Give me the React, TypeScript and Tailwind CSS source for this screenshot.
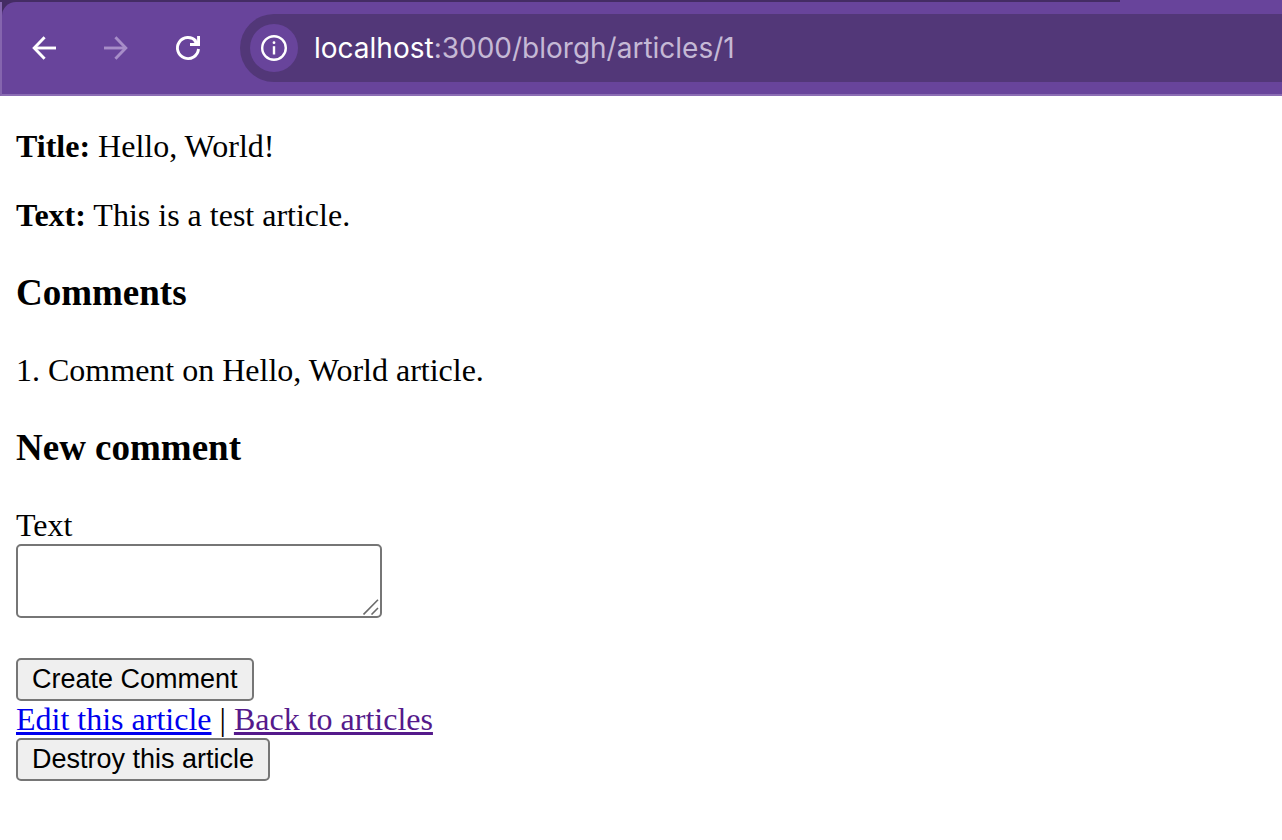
import React from "react";

function BackIcon({ className }: { className?: string }) {
  return (
    <svg viewBox="0 0 28 28" className={className} fill="none" stroke="currentColor" strokeWidth="2.9" aria-hidden="true">
      <path d="M14.6 3.2 L4.2 14 L14.6 24.8" />
      <path d="M4.4 14 H26" />
    </svg>
  );
}

function ReloadIcon() {
  return (
    <svg viewBox="0 0 28 28" className="size-7" fill="none" stroke="currentColor" strokeWidth="2.9" aria-hidden="true">
      <path d="M24.5 15 A10.55 10.55 0 1 1 21.9 7" />
      <path d="M24.55 2 V10.5 H16" />
      <path d="M20.5 6.5 L24.3 10.3" strokeWidth="3.2" />
    </svg>
  );
}

function InfoIcon() {
  return (
    <svg viewBox="0 0 26 26" className="size-[26px]" fill="none" stroke="currentColor" aria-hidden="true">
      <circle cx="13" cy="13" r="11.8" strokeWidth="2.4" />
      <path d="M13 11.2 V19.5" strokeWidth="2.4" />
      <circle cx="13" cy="7.7" r="1.4" fill="currentColor" stroke="none" />
    </svg>
  );
}

function Toolbar() {
  return (
    <header className="bg-[#68449b]">
      <div className="flex h-0.5">
        <div className="grow-[1120] bg-[#442c64]" />
        <div className="grow-[162]" />
      </div>
      <div className="border-b-2 border-l-2 border-b-[#8b6db4] border-l-[#8565ae] bg-[#442c64]">
        <div className="flex items-center rounded-tl-[14px] bg-[#68449b] py-3 pl-7 text-white">
          <nav className="flex gap-11" aria-label="Navigation">
            <button type="button" aria-label="Back" className="block">
              <BackIcon className="size-7" />
            </button>
            <button type="button" aria-label="Forward" disabled className="block text-[#a78dc8]">
              <BackIcon className="size-7 rotate-180" />
            </button>
            <button type="button" aria-label="Reload" className="block">
              <ReloadIcon />
            </button>
          </nav>
          <div className="ml-[38px] flex h-[68px] grow items-center gap-4 rounded-l-full bg-[#523778] pl-2.5">
            <button type="button" aria-label="Site information" className="flex size-12 items-center justify-center rounded-full bg-[#68449b]">
              <InfoIcon />
            </button>
            <div className="font-['Inter',sans-serif] text-[28px] leading-9 text-[#c5b9d5]">
              <span className="text-white">localhost</span>:3000/blorgh/articles/1
            </div>
          </div>
        </div>
      </div>
    </header>
  );
}

const buttonClass =
  "block rounded-[5px] border-2 border-[#767676] bg-[#efefef] px-3.5 py-1 font-['Liberation_Sans',Arial,sans-serif] text-[27px] leading-[31px] text-black";

const headingClass = "my-[37px] text-[37px] leading-[44px] font-bold";

export default function App() {
  return (
    <div className="min-h-screen bg-white font-['Liberation_Serif','Times_New_Roman',serif] text-[32px] leading-[37px] text-black">
      <Toolbar />
      <main className="px-4 pt-8 pb-14">
        <p className="mb-8">
          <strong className="font-bold">Title:</strong> Hello, World!
        </p>
        <p>
          <strong className="font-bold">Text:</strong> This is a test article.
        </p>

        <h3 className={headingClass}>Comments</h3>
        <p>1. Comment on Hello, World article.</p>

        <h3 className={headingClass}>New comment</h3>
        <form onSubmit={(e) => e.preventDefault()}>
          <label htmlFor="comment_text" className="block w-fit">
            Text
          </label>
          <div className="relative mb-10 w-fit">
            <textarea
              id="comment_text"
              className="block h-[74px] w-[366px] resize rounded-[5px] border-2 border-[#767676] bg-white p-1 font-['Liberation_Mono',monospace] text-[26px] leading-[31px] [&::-webkit-resizer]:bg-transparent"
            />
            <svg
              viewBox="0 0 16 16"
              className="pointer-events-none absolute right-[3px] bottom-[3px] size-4"
              stroke="#6b6b6b"
              strokeWidth="1.6"
              aria-hidden="true"
            >
              <path d="M0.5 15.5 L15 0.8 M8.5 15.5 L15 9" />
            </svg>
          </div>
          <button type="submit" className={buttonClass}>
            Create Comment
          </button>
        </form>

        <div>
          <a href="#edit" className="text-[#0000ee] underline decoration-[3px] underline-offset-2">
            Edit this article
          </a>{" "}
          |{" "}
          <a href="#articles" className="text-[#551a8b] underline decoration-[3px] underline-offset-2">
            Back to articles
          </a>
        </div>
        <button type="button" className={buttonClass}>
          Destroy this article
        </button>
      </main>
    </div>
  );
}
